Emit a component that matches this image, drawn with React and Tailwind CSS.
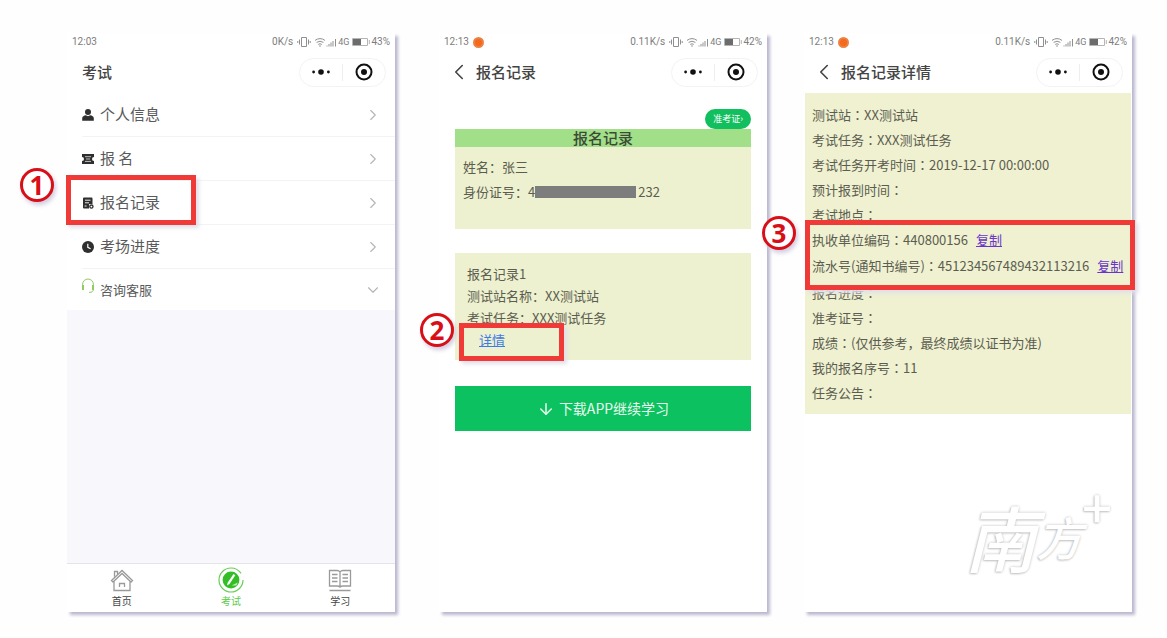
import { ArrowDown, ChevronDown, ChevronLeft, ChevronRight } from "lucide-react";

const menu = [
  { label: "个人信息", icon: <UserIcon /> },
  { label: "报 名", icon: <TicketIcon /> },
  { label: "报名记录", icon: <RecordIcon />, step: "1" },
  { label: "考场进度", icon: <ClockIcon /> },
];

const before = [
  ["测试站", "XX测试站"],
  ["考试任务", "XXX测试任务"],
  ["考试任务开考时间", "2019-12-17 00:00:00"],
  ["预计报到时间", ""],
  ["考试地点", ""],
];

const codes = [
  ["执收单位编码", "440800156"],
  ["流水号(通知书编号)", "451234567489432113216"],
];

const after = [
  ["报名进度", ""],
  ["准考证号", ""],
  ["成绩", "(仅供参考，最终成绩以证书为准)"],
  ["我的报名序号", "11"],
  ["任务公告", ""],
];

function UserIcon() {
  return (
    <svg viewBox="0 0 12 12" className="w-3 h-3" fill="#2f2f2f">
      <circle cx="6" cy="3" r="3" />
      <path d="M0.2 11.8V9.2C0.2 7.4 2 6.6 3.8 6.3L6 7.2L8.2 6.3C10 6.6 11.8 7.4 11.8 9.2V11.8Z" />
    </svg>
  );
}

function TicketIcon() {
  return (
    <svg viewBox="0 0 12 12" className="w-3 h-3" fill="#2f2f2f">
      <path d="M0 1H12V4A2 2 0 0 0 12 8V11H0V8A2 2 0 0 0 0 4Z" />
      <path d="M3 3.7H9M3 8.4H9M4 6H8" stroke="#fff" strokeWidth="0.7" />
    </svg>
  );
}

function RecordIcon() {
  return (
    <svg viewBox="0 0 12 12" className="w-3 h-3">
      <path d="M2 0.5H9.5Q10.5 0.5 10.5 1.5V7H7V11.5H2Q1 11.5 1 10.5V1.5Q1 0.5 2 0.5Z" fill="#2f2f2f" />
      <path d="M3 3.2H8.5M3 5.8H7M2.6 9H4.6" stroke="#fff" strokeWidth="0.9" />
      <circle cx="9.4" cy="9.6" r="1.6" fill="none" stroke="#2f2f2f" strokeWidth="1.3" />
    </svg>
  );
}

function ClockIcon() {
  return (
    <svg viewBox="0 0 12 12" className="w-3 h-3">
      <circle cx="6" cy="6" r="6" fill="#2f2f2f" />
      <path d="M5.8 2.8V6.4L8.6 7.8" fill="none" stroke="#fff" strokeWidth="1.2" />
    </svg>
  );
}

function HeadsetIcon() {
  return (
    <svg viewBox="0 0 14 16" className="w-3.5 h-4 mb-2" fill="none" stroke="#8fca63">
      <path d="M1.6 8V6.4A5.4 5.4 0 0 1 12.4 6.4V11.5Q12.4 14.4 8 14.4" strokeWidth="1" />
      <path d="M2 7V12M12 7V12" strokeWidth="2" />
    </svg>
  );
}

function HomeIcon() {
  return (
    <svg viewBox="0 0 24 24" className="w-6 h-6" fill="none" stroke="#9a9a9a" strokeWidth="1.3">
      <path d="M1.5 12.5L12 2.5L22.5 12.5L21 14L12 5.5L3 14Z" />
      <path d="M4.5 8.8V3.5H7.5V6M4 13.5V22.5H20V13.5M9.5 19V15.5H14.5V19" />
    </svg>
  );
}

function ExamIcon() {
  return (
    <svg viewBox="0 0 26 26" className="w-[26px] h-[26px] -my-px" fill="none">
      <circle cx="13" cy="13" r="12" stroke="#68cf55" strokeWidth="1.2" strokeDasharray="68 7" />
      <circle cx="13" cy="13" r="8.4" fill="#35bd27" />
      <path d="M15.5 7L17.3 8.2L11.5 17L9 18.5L9.6 15.8Z" fill="#fff" />
      <path d="M13.5 18.4H18.5L19.8 15.5Z" fill="#b9efab" />
    </svg>
  );
}

function StudyIcon() {
  return (
    <svg viewBox="0 0 24 24" className="w-6 h-6" fill="none" stroke="#9a9a9a" strokeWidth="1.3">
      <path d="M12 4Q11 2.5 9 2.5H1.5V18H9Q11 18 12 19Q13 18 15 18H22.5V2.5H15Q13 2.5 12 4V19" />
      <path d="M4 6.5H9.5M4 10H9.5M4 13.5H9.5M14.5 6.5H20M14.5 10H20M14.5 13.5H20M1.5 22.5H22.5" />
    </svg>
  );
}

// vibrate + wifi + signal
function StatusIcons() {
  return (
    <svg viewBox="0 0 40 12" className="w-10 h-3" fill="none" stroke="#8f8f8f" strokeWidth="1">
      <path d="M4.5 1.5H9.5V10.5H4.5ZM2.5 3.5V8.5M11.5 3.5V8.5M0.8 5V7M13.2 5V7" />
      <path d="M18 4.4Q23 0.8 28 4.4M19.6 6.4Q23 4 26.4 6.4M21.2 8.4Q23 7.2 24.8 8.4" />
      <circle cx="23" cy="10" r="0.8" fill="#8f8f8f" stroke="none" />
      <path d="M30 10.5V9.5M32 10.5V8M34 10.5V6.5M36 10.5V5M38.5 10.5V3" />
    </svg>
  );
}

function Battery() {
  return (
    <svg viewBox="0 0 18 8" className="w-[18px] h-2">
      <path d="M0.5 0.5H15.5V7.5H0.5ZM17.3 2V6" fill="none" stroke="#b5b5b5" />
      <rect x="1" y="1" width="8" height="6" fill="#6c6c6c" />
    </svg>
  );
}

function StatusBar({ time, speed, power, dot }) {
  return (
    <div className="h-[18px] pl-[5px] pr-[5px] flex items-center justify-between text-[10px] leading-none text-[#7d7d7d] font-[Roboto,sans-serif]">
      <div className="flex items-center gap-1">
        <span>{time}</span>
        {dot && <span className="w-[11px] h-[11px] rounded-full bg-[#f4691c] border-2 border-[#ec8144]" />}
      </div>
      <div className="flex items-center">
        <span className="mr-1">{speed}</span>
        <StatusIcons />
        <span className="ml-px mr-[3px] text-[9px]">4G</span>
        <Battery />
        <span className="ml-px">{power}</span>
      </div>
    </div>
  );
}

function TitleBar({ title, back }) {
  return (
    <header className="h-[42px] pl-[15px] pr-[9px] flex items-center justify-between">
      <div className="flex items-center">
        {back && (
          <button aria-label="返回" className="-ml-2 mr-1">
            <ChevronLeft className="w-[26px] h-[26px] text-[#444]" strokeWidth={1.5} />
          </button>
        )}
        <h1 className="text-[15px] leading-5 font-medium text-[#444]">{title}</h1>
      </div>
      <div className="w-[87px] h-[29px] rounded-full border border-[#f3f3f3] flex items-center">
        <button aria-label="更多" className="flex-1 flex justify-center">
          <svg viewBox="0 0 18 6" className="w-[18px] h-[6px]" fill="#111">
            <circle cx="1.6" cy="3" r="1.4" />
            <circle cx="9" cy="3" r="2.8" />
            <circle cx="16.4" cy="3" r="1.4" />
          </svg>
        </button>
        <div className="w-px h-[17px] bg-[#eeeeee]" />
        <button aria-label="关闭" className="flex-1 flex justify-center">
          <svg viewBox="0 0 18 18" className="w-[18px] h-[18px]">
            <circle cx="9" cy="9" r="7.5" fill="none" stroke="#111" strokeWidth="2" />
            <circle cx="9" cy="9" r="3" fill="#111" />
          </svg>
        </button>
      </div>
    </header>
  );
}

function Phone({ className, children }) {
  return (
    <section className={`flex-1 min-w-0 flex flex-col bg-white shadow-[3px_3px_3px_#bab8cf] ${className}`}>
      {children}
    </section>
  );
}

// Red numbered frame laid over the highlighted part
function Mark({ step, frame, badge }) {
  return (
    <div className={`absolute z-10 pointer-events-none border-[5px] border-[#f03a38] shadow-[3px_3px_4px_#e2dfea] ${frame}`}>
      <span
        className={`absolute w-[34px] h-[34px] rounded-full border-[3px] border-[#d90f17] bg-white text-[#d90f17] text-[26px] leading-[28px] font-bold font-['Open_Sans',sans-serif] text-center shadow-[2px_3px_4px_#d0cde0] ${badge}`}
      >
        {step}
      </span>
    </div>
  );
}

function Field({ name, value, children }) {
  return (
    <p className="whitespace-nowrap">
      {name}
      <span className="font-['Noto_Sans_CJK_TC',sans-serif]">：</span>
      {value}
      {children}
    </p>
  );
}

function ExamHome() {
  return (
    <Phone className="mr-11">
      <StatusBar time="12:03" speed="0K/s" power="43%" />
      <TitleBar title="考试" />
      <nav className="bg-white text-[#5a5a5a]">
        {menu.map((item) => (
          <div key={item.label} className="relative">
            <a href="#" className="h-11 ml-[15px] pr-[13px] flex items-center border-b border-[#f3f3f3] text-[15px]">
              {item.icon}
              <span className="ml-[6px] flex-1">{item.label}</span>
              <ChevronRight className="w-[18px] h-[18px] text-[#b5b5b5]" strokeWidth={1.5} />
            </a>
            {item.step && (
              <Mark step={item.step} frame="-left-px -top-[6px] w-[130px] h-[50px]" badge="-left-[51px] -top-[12px]" />
            )}
          </div>
        ))}
        <a href="#" className="h-[41px] ml-[14px] pr-[13px] flex items-center text-[13px]">
          <HeadsetIcon />
          <span className="ml-[5px] flex-1">咨询客服</span>
          <ChevronDown className="w-[18px] h-[18px] text-[#b5b5b5]" strokeWidth={1.5} />
        </a>
      </nav>
      <div className="flex-1 bg-[#f7f7fc]" />
      <footer className="h-[49px] border-t border-[#e3e3e8] grid grid-cols-3 text-[10px] leading-3 text-[#444]">
        <a href="#" className="flex flex-col items-center gap-[3px] pt-1">
          <HomeIcon />
          首页
        </a>
        <a href="#" className="flex flex-col items-center gap-[3px] pt-1 text-[#5ccb4a]">
          <ExamIcon />
          考试
        </a>
        <a href="#" className="flex flex-col items-center gap-[3px] pt-1">
          <StudyIcon />
          学习
        </a>
      </footer>
    </Phone>
  );
}

function RecordList() {
  return (
    <Phone className="mr-[37px]">
      <StatusBar time="12:13" speed="0.11K/s" power="42%" dot />
      <TitleBar title="报名记录" back />
      <div className="px-4 pt-4 flex flex-col text-[13px] text-[#5c5d50]">
        <button className="self-end w-[46px] h-5 rounded-full bg-[#12bf5f] text-white text-[9px] leading-5 whitespace-nowrap">
          准考证›
        </button>
        <h2 className="h-[18px] bg-[#a1df89] text-center text-[15px] leading-[18px] font-medium text-[#3c4a36]">报名记录</h2>
        <div className="h-[82px] bg-[#edf1cf] pl-2 pt-[7px] leading-[25px]">
          <p>姓名：张三</p>
          <p className="flex items-center">
            身份证号：4
            <span className="w-[101px] h-3 mr-[2px] bg-[#7d7d7d]" />
            232
          </p>
        </div>
        <div className="relative h-[107px] mt-6 bg-[#edf1cf] pl-3 pt-[10px] leading-[22px]">
          <p>报名记录1</p>
          <p>测试站名称：XX测试站</p>
          <p>考试任务：XXX测试任务</p>
          <a href="#" className="ml-3 text-[#3f7be8] underline">详情</a>
          <Mark step="2" frame="left-1 top-[70px] w-[105px] h-[38px]" badge="-left-[44px] -top-[15px]" />
        </div>
        <button className="h-[45px] mt-[26px] bg-[#0cc160] text-[#e9faef] text-[14px] flex items-center justify-center gap-1">
          <ArrowDown className="w-[18px] h-[18px]" strokeWidth={2} />
          下载APP继续学习
        </button>
      </div>
    </Phone>
  );
}

function RecordDetail() {
  return (
    <Phone className="relative">
      <StatusBar time="12:13" speed="0.11K/s" power="42%" dot />
      <TitleBar title="报名记录详情" back />
      <div className="mx-px bg-[#eff1d1] pl-[7px] pt-[9px] pb-[9px] text-[13px] leading-[25px] text-[#5c5d50]">
        {before.map(([name, value]) => (
          <Field key={name} name={name} value={value} />
        ))}
        <div className="relative mb-px leading-[26px]">
          {codes.map(([name, value]) => (
            <Field key={name} name={name} value={value}>
              <a href="#" className="ml-2 text-[#6a35c9] underline">复制</a>
            </Field>
          ))}
          <Mark step="3" frame="-left-[7px] -right-1 -top-[7px] -bottom-[11px]" badge="-left-[48px] -top-[9px]" />
        </div>
        {after.map(([name, value]) => (
          <Field key={name} name={name} value={value} />
        ))}
      </div>
      {/* Watermark */}
      <div className="absolute right-5 bottom-10 flex items-center italic font-medium text-white leading-none [text-shadow:0_0_3px_#c0c0c0,-1px_1px_2px_#cccccc]">
        <span className="text-[72px]">南</span>
        <span className="text-[46px]">方</span>
        <span className="self-start -mt-5 text-[52px] not-italic">+</span>
      </div>
    </Phone>
  );
}

export default function App() {
  return (
    <main className="min-h-screen flex bg-[#fefefe] pt-[33px] pb-[26px] pl-[67px] pr-[35px] font-['Noto_Sans_CJK_SC',sans-serif]">
      <ExamHome />
      <RecordList />
      <RecordDetail />
    </main>
  );
}
